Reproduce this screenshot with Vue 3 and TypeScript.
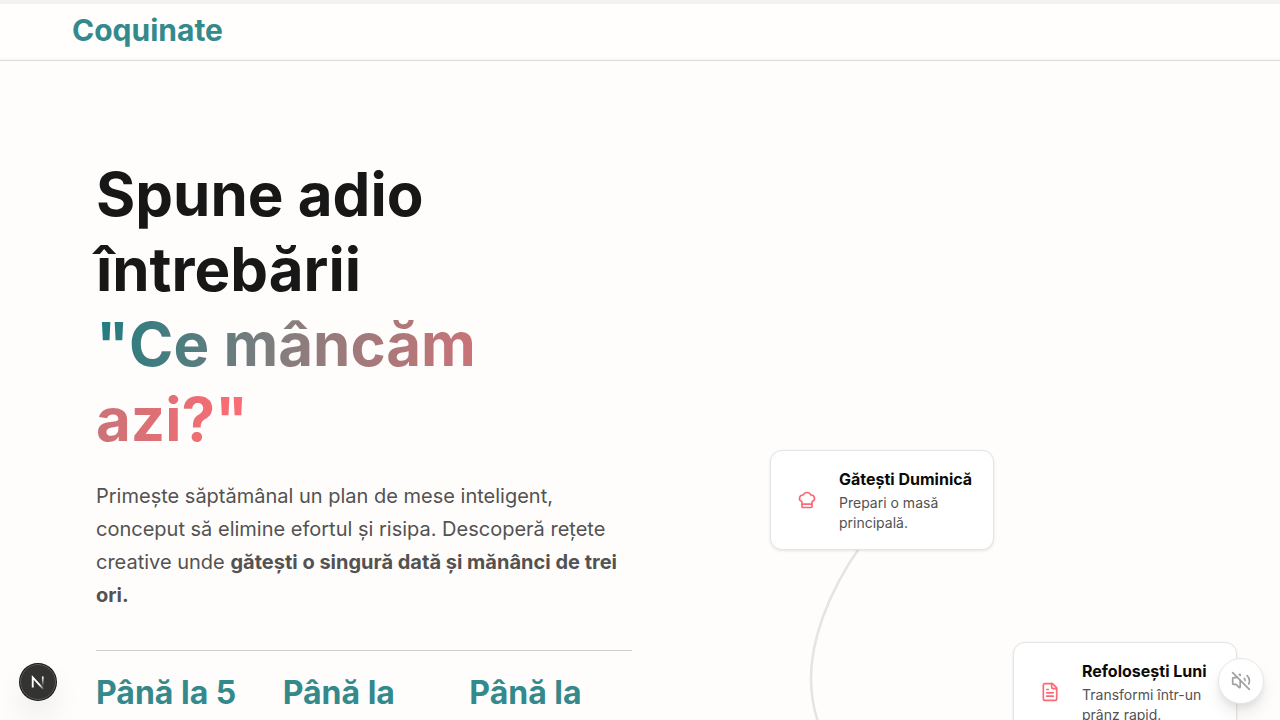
<script setup lang="ts">
interface Step {
  id: string
  title: string
  text: string
  icon: 'chef' | 'file'
}

const steps: Step[] = [
  { id: 'sunday', title: 'Gătești Duminică', text: 'Prepari o masă principală.', icon: 'chef' },
  { id: 'monday', title: 'Refolosești Luni', text: 'Transformi într-un prânz rapid.', icon: 'file' },
]

const stats: string[] = ['Până la 5', 'Până la', 'Până la']
</script>

<template>
  <div class="page">
    <header class="header">
      <div class="progress"></div>
      <div class="bar">
        <a class="logo" href="#">Coquinate</a>
      </div>
    </header>

    <main class="hero">
      <section class="intro">
        <h1>
          Spune adio<br />întrebării<br />
          <span class="gradient">"Ce mâncăm<br />azi?"</span>
        </h1>
        <p class="lead">
          Primește săptămânal un plan de mese inteligent, conceput să elimine efortul și risipa.
          Descoperă rețete creative unde
          <strong>gătești o singură dată și mănânci de trei ori.</strong>
        </p>
        <div class="stats">
          <div v-for="(stat, i) in stats" :key="i" class="stat">{{ stat }}</div>
        </div>
      </section>

      <section class="diagram">
        <svg class="connector" viewBox="0 0 536 560" fill="none" aria-hidden="true">
          <path d="M214 375C177 427 163 475 163 509C163 527 166 543 172 558" stroke="#e4e4e4" stroke-width="2.5" />
        </svg>
        <article v-for="step in steps" :key="step.id" class="card" :class="step.id">
          <div class="card-icon">
            <svg v-if="step.icon === 'chef'" class="icon" viewBox="0 0 24 24" aria-hidden="true">
              <path d="M17 21a1 1 0 0 0 1-1v-5.35c0-.457.316-.844.727-1.041a4 4 0 0 0-2.134-7.589 5 5 0 0 0-9.186 0 4 4 0 0 0-2.134 7.588c.411.198.727.585.727 1.041V20a1 1 0 0 0 1 1Z" />
              <path d="M6 17h12" />
            </svg>
            <svg v-else class="icon" viewBox="0 0 24 24" aria-hidden="true">
              <path d="M15 2H6a2 2 0 0 0-2 2v16a2 2 0 0 0 2 2h12a2 2 0 0 0 2-2V7Z" />
              <path d="M14 2v4a2 2 0 0 0 2 2h4M10 9H8M16 13H8M16 17H8" />
            </svg>
          </div>
          <div class="card-body">
            <h2>{{ step.title }}</h2>
            <p>{{ step.text }}</p>
          </div>
        </article>
      </section>
    </main>

    <button class="sound" type="button" aria-label="Sunet oprit">
      <svg class="icon" viewBox="0 0 24 24" aria-hidden="true">
        <path d="M16 9a5 5 0 0 1 .95 2.293M19.364 5.636a9 9 0 0 1 1.889 9.96M2 2l20 20" />
        <path d="m7 7-.587.587A1.4 1.4 0 0 1 5.416 8H3a1 1 0 0 0-1 1v6a1 1 0 0 0 1 1h2.416a1.4 1.4 0 0 1 .997.413l3.383 3.384A.705.705 0 0 0 11 19.298V11M9.828 4.172A.686.686 0 0 1 11 4.657v.686" />
      </svg>
    </button>

    <button class="devtools" type="button" aria-label="Next.js">
      <svg viewBox="0 0 40 40" aria-hidden="true">
        <defs>
          <linearGradient id="nd" x1="15" y1="14" x2="27" y2="29" gradientUnits="userSpaceOnUse">
            <stop offset="0.6" stop-color="#fff" />
            <stop offset="1" stop-color="#fff" stop-opacity="0" />
          </linearGradient>
          <linearGradient id="nv" x1="0" y1="14" x2="0" y2="25" gradientUnits="userSpaceOnUse">
            <stop offset="0" stop-color="#fff" />
            <stop offset="1" stop-color="#fff" stop-opacity="0" />
          </linearGradient>
        </defs>
        <path d="M13.8 26.5V14.6L26.4 28.5" stroke="url(#nd)" stroke-width="2.2" fill="none" />
        <path d="M25.6 13.5V25" stroke="url(#nv)" stroke-width="2" />
      </svg>
    </button>
  </div>
</template>

<style>
body {
  margin: 0;
  background: #fefdfb;
}
</style>

<style scoped>
.page {
  height: 100vh;
  overflow: hidden;
  background: #fefdfb;
  color: #171717;
  font-family: Inter, "Liberation Sans", sans-serif;
}

.header {
  background: #fffefc;
  border-bottom: 1px solid #dbdbda;
  box-shadow: inset 0 -2px 0 #f8f8f7;
}

.progress {
  height: 4px;
  background: #f2f2f1;
}

.bar {
  display: flex;
  align-items: center;
  padding: 8px 72px 12px;
}

.logo {
  color: #34898d;
  font-size: 30px;
  line-height: 36px;
  font-weight: 700;
  text-decoration: none;
}

.hero {
  display: grid;
  grid-template-columns: 1fr 1fr;
  gap: 16px;
  padding: 96px 96px 0;
}

h1 {
  margin: 0;
  font-size: 60px;
  line-height: 75px;
  font-weight: 700;
}

.gradient {
  color: transparent;
  background: linear-gradient(95deg, #1f7c82, #8a7d7d 37%, #ff6b72);
  -webkit-background-clip: text;
  background-clip: text;
}

.lead {
  margin: 23px 0 38px;
  color: #525252;
  font-size: 20px;
  line-height: 33px;
}

.stats {
  display: grid;
  grid-template-columns: repeat(3, 1fr);
  gap: 24px;
  padding-top: 24px;
  border-top: 1px solid #cfcfce;
}

.stat {
  color: #34898d;
  font-size: 32px;
  line-height: 36px;
  font-weight: 700;
  white-space: nowrap;
}

.diagram {
  position: relative;
}

.connector {
  position: absolute;
  top: 12px;
  left: 0;
  width: 536px;
  height: 560px;
}

.card {
  position: absolute;
  box-sizing: border-box;
  display: flex;
  align-items: center;
  gap: 12px;
  width: 224px;
  padding: 16px;
  background: #fff;
  border: 1px solid #e4e4e4;
  border-radius: 12px;
  box-shadow: 0 1px 3px rgba(0, 0, 0, 0.1);
}

.sunday {
  top: 293px;
  left: 122px;
}

.monday {
  top: 485px;
  left: 365px;
}

.card-icon {
  display: flex;
  flex: none;
  align-items: center;
  justify-content: center;
  width: 40px;
  height: 40px;
  color: #fb6a73;
}

.icon {
  width: 20px;
  height: 20px;
  fill: none;
  stroke: currentColor;
  stroke-width: 2;
  stroke-linecap: round;
  stroke-linejoin: round;
}

.card h2 {
  margin: 0 0 2px;
  color: #0a0a0a;
  font-size: 16px;
  line-height: 24px;
  font-weight: 700;
  white-space: nowrap;
}

.card p {
  margin: 0;
  color: #525252;
  font-size: 14px;
  line-height: 20px;
}

.sound {
  position: fixed;
  right: 16px;
  bottom: 16px;
  display: flex;
  align-items: center;
  justify-content: center;
  width: 46px;
  height: 46px;
  padding: 0;
  color: #a0a0a0;
  background: #fff;
  border: 1px solid #e6e6e6;
  border-radius: 50%;
  box-shadow: 0 10px 15px rgba(0, 0, 0, 0.08), 0 4px 6px rgba(0, 0, 0, 0.06);
}

.devtools {
  position: fixed;
  left: 20px;
  bottom: 20px;
  width: 36px;
  height: 36px;
  padding: 0;
  background: #333331;
  border: 1px solid #5a5a58;
  border-radius: 50%;
  box-shadow: 0 0 0 1px #171717, 0 16px 32px -8px rgba(0, 0, 0, 0.24);
}

.devtools svg {
  display: block;
  width: 100%;
  height: 100%;
}
</style>
